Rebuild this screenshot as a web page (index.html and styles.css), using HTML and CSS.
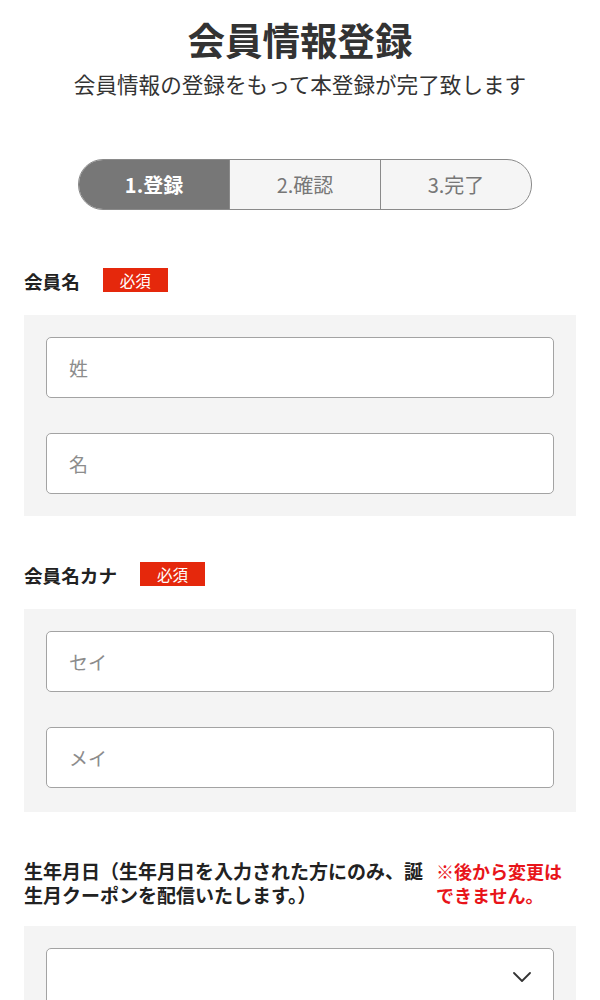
FILE: index.html
```html
<!DOCTYPE html>
<html lang="ja">
<head>
<meta charset="utf-8">
<title>会員情報登録</title>
<link rel="stylesheet" href="styles.css">
</head>
<body>
<main class="page">
  <header class="head">
    <h1 class="title">会員情報登録</h1>
    <p class="lead">会員情報の登録をもって本登録が完了致します</p>
  </header>

  <ol class="steps">
    <li class="step is-active">1.登録</li>
    <li class="step">2.確認</li>
    <li class="step">3.完了</li>
  </ol>

  <section class="field field-first">
    <div class="label-row">
      <span class="label">会員名</span>
      <span class="badge">必須</span>
    </div>
    <div class="box">
      <div class="input"><span class="ph">姓</span></div>
      <div class="input"><span class="ph">名</span></div>
    </div>
  </section>

  <section class="field">
    <div class="label-row">
      <span class="label">会員名カナ</span>
      <span class="badge">必須</span>
    </div>
    <div class="box box-kana">
      <div class="input"><span class="ph">セイ</span></div>
      <div class="input"><span class="ph">メイ</span></div>
    </div>
  </section>

  <section class="field field-birth">
    <div class="birth-row">
      <span class="label birth-label">生年月日（生年月日を入力された方にのみ、誕生月クーポンを配信いたします。）</span>
      <span class="note">※後から変更はできません。</span>
    </div>
    <div class="box box-birth">
      <div class="input select">
        <svg class="chev" width="18" height="10" viewBox="0 0 18 10" aria-hidden="true"><path d="M1 1 L9 9 L17 1" fill="none" stroke="#333" stroke-width="1.8" stroke-linecap="round" stroke-linejoin="round"/></svg>
      </div>
    </div>
  </section>
</main>
</body>
</html>
```

FILE: styles.css
```css
* { box-sizing: border-box; }
html, body { margin: 0; padding: 0; background: #fff; }
body {
  font-family: "Noto Sans CJK JP", "Noto Sans", sans-serif;
  color: #222;
}
.page { padding: 0 24px; }

.head { text-align: center; }
.title {
  margin: 15px 0 0;
  font-size: 37.5px;
  line-height: 48px;
  font-weight: 700;
  color: #333;
}
.lead {
  margin: 6px 0 0;
  font-size: 21.6px;
  line-height: 30px;
  color: #333;
}

.steps {
  list-style: none;
  margin: 60px 0 0 54px;
  padding: 0;
  width: 454px;
  height: 51px;
  display: flex;
  border: 1px solid #8a8a8a;
  border-radius: 25px;
  overflow: hidden;
  background: #f5f5f5;
}
.step {
  flex: 1;
  display: flex;
  align-items: center;
  justify-content: center;
  font-size: 20px;
  color: #777;
  border-left: 1px solid #8a8a8a;
}
.step:first-child { border-left: 0; }
.step.is-active {
  background: #777;
  color: #fff;
  font-weight: 700;
}

.field { margin-top: 46px; }
.field-first { margin-top: 58px; }
.label-row {
  display: flex;
  align-items: center;
  height: 24px;
}
.label {
  font-size: 18.6px;
  font-weight: 700;
  color: #222;
}
.badge {
  margin-left: 23px;
  width: 65px;
  height: 24px;
  background: #e5280c;
  color: #fff;
  font-size: 15.5px;
  line-height: 24px;
  text-align: center;
}

.box {
  margin-top: 23px;
  background: #f4f4f4;
  padding: 22px;
  display: flex;
  flex-direction: column;
  gap: 35px;
}
.box-kana { padding-bottom: 24px; }
.input {
  height: 61px;
  background: #fff;
  border: 1px solid #a3a3a3;
  border-radius: 5px;
  display: flex;
  align-items: center;
  padding-left: 22px;
}
.ph {
  font-size: 19px;
  color: #8c8c8c;
}

.field-birth { margin-top: 47px; }
.birth-row {
  display: flex;
  gap: 10px;
  align-items: flex-start;
}
.birth-label {
  width: 402px;
  font-size: 19px;
  line-height: 24px;
}
.note {
  width: 130px;
  font-size: 18px;
  line-height: 24px;
  font-weight: 700;
  color: #e8141a;
}
.box-birth { margin-top: 19px; }
.select {
  justify-content: flex-end;
  padding-right: 22px;
  align-items: flex-start;
  padding-top: 23px;
}
.chev { display: block; }
```
